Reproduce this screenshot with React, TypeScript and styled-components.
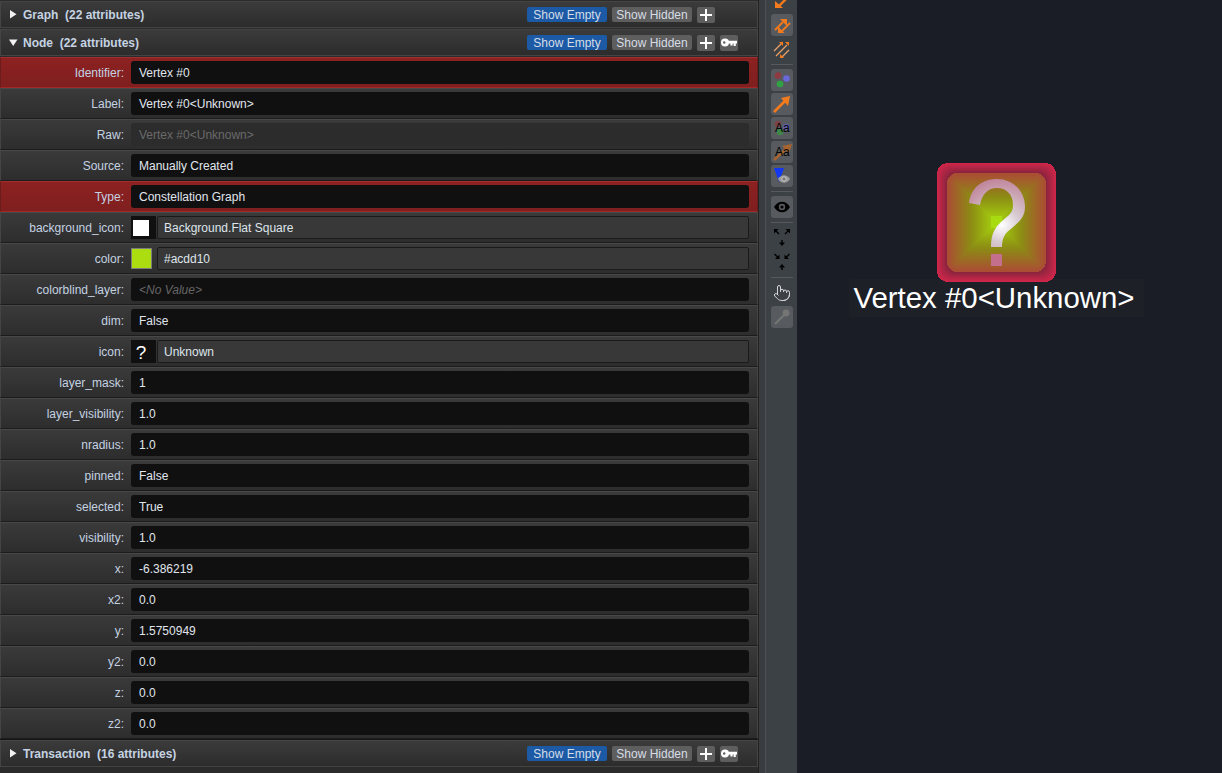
import React from 'react'
import styled, { createGlobalStyle } from 'styled-components'
import { Pointer } from 'lucide-react'

const GlobalStyle = createGlobalStyle`
  html, body {
    margin: 0;
    padding: 0;
    height: 100%;
    overflow: hidden;
    background: #1a1d26;
  }
  #root {
    height: 100%;
  }
`

const font = `"Liberation Sans", Arial, sans-serif`

const Shell = styled.div`
  display: flex;
  width: 1222px;
  height: 773px;
  font-family: ${font};
  font-size: 12px;
  overflow: hidden;
`

const Panel = styled.div`
  width: 758px;
  height: 773px;
  flex: none;
  box-sizing: border-box;
  background: #2b2b2b;
  display: flex;
  flex-direction: column;
  overflow: hidden;
  padding-top: 1px;
`

const Splitter = styled.div`
  width: 8px;
  flex: none;
  background: #3a3d40;
  border-left: 1px solid #222;
  border-right: 1px solid #4e5154;
  box-sizing: border-box;
`

const Toolbar = styled.div`
  width: 31px;
  flex: none;
  background: #3c4145;
  display: flex;
  flex-direction: column;
  align-items: center;
`

const Canvas = styled.div`
  flex: 1;
  background: #1a1d26;
  position: relative;
`

const Header = styled.div`
  height: 27px;
  box-sizing: border-box;
  flex: none;
  display: flex;
  align-items: center;
  margin-bottom: 1px;
  padding: 0 19px 0 8px;
  background: linear-gradient(#3b3b3b, #2c2c2c);
  border: 1px solid #444;
  color: #c5d3e2;
`

const Arrow = styled.svg`
  width: 9px;
  height: 9px;
  margin-right: 5px;
  flex: none;
`

const HeaderTitle = styled.span`
  white-space: pre;
  flex: 1;
  font-weight: bold;
`

const Pill = styled.div<{ $on?: boolean }>`
  width: 80px;
  height: 15px;
  line-height: 17px;
  text-align: center;
  border-radius: 2px;
  margin-right: 5px;
  background: ${p => (p.$on ? '#1c5aa6' : '#5e5e5e')};
  color: #d6dde6;
  white-space: nowrap;
`

const IconButton = styled.div`
  width: 18px;
  height: 16px;
  border-radius: 2px;
  background: #5e5e5e;
  margin-right: 5px;
  display: flex;
  align-items: center;
  justify-content: center;
  &:last-child {
    margin-right: 0;
  }
`

const KeySlot = styled.div`
  width: 18px;
`

const Rows = styled.div`
  display: flex;
  flex-direction: column;
  flex: none;
  border-bottom: 1px solid #161616;
`

const Row = styled.div<{ $key?: boolean }>`
  height: 31px;
  box-sizing: border-box;
  display: grid;
  grid-template-columns: 130px 1fr;
  align-items: center;
  padding-right: 8px;
  background: ${p =>
    p.$key ? 'linear-gradient(#8d2121, #7f1f1f)' : 'linear-gradient(#3a3a3a, #2d2d2d)'};
  border: 1px solid ${p => (p.$key ? '#6d1c1c' : '#444')};
  border-top-color: ${p => (p.$key ? '#a03030' : '#484848')};
  border-bottom-color: ${p => (p.$key ? '#a32727' : '#1c1c1c')};
`

const Name = styled.div`
  text-align: right;
  padding-right: 7px;
  height: 23px;
  line-height: 25px;
  color: #c4d2e2;
`

const ValueField = styled.div<{ $read?: boolean; $empty?: boolean }>`
  height: 23px;
  line-height: 25px;
  padding-left: 8px;
  border-radius: 3px;
  background: ${p => (p.$read ? '#2c2c2c' : '#101010')};
  color: ${p => (p.$read ? '#6a6a6a' : p.$empty ? '#666' : '#e0e6ee')};
  font-style: ${p => (p.$empty ? 'italic' : 'normal')};
  white-space: pre;
`

const ValuePair = styled.div`
  display: flex;
  height: 23px;
`

const Swatch = styled.div<{ $dark?: boolean }>`
  width: 25px;
  height: 23px;
  flex: none;
  background: ${p => (p.$dark ? '#101010' : 'transparent')};
  box-sizing: border-box;
  padding-left: 2px;
  display: flex;
  align-items: center;
`

const ColorChip = styled.div<{ $fill: string }>`
  width: 21px;
  height: 21px;
  margin-left: -2px;
  box-sizing: border-box;
  background: ${p => p.$fill};
  border: 1px solid #7d7d7d;
`

const WhiteSquare = styled.div`
  width: 16px;
  height: 16px;
  background: #fff;
`

const SwatchGlyph = styled.span`
  width: 16px;
  height: 19px;
  text-align: center;
  color: #fff;
  font-size: 19px;
  line-height: 21px;
`

const PairText = styled.div`
  flex: 1;
  height: 23px;
  line-height: 23px;
  box-sizing: border-box;
  margin-left: 1px;
  padding-left: 6px;
  background: #383838;
  border: 1px solid #1a1a1a;
  border-radius: 2px;
  color: #dfe5ec;
`

const ToolButton = styled.div<{ $flat?: boolean }>`
  width: 22px;
  height: 22px;
  flex: none;
  border-radius: 3px;
  margin-bottom: 2px;
  background: ${p => (p.$flat ? 'transparent' : '#575b5f')};
  display: flex;
  align-items: center;
  justify-content: center;
`

const ToolSep = styled.div`
  width: 22px;
  height: 1px;
  background: #565a5e;
  margin: 2px 0 4px;
  flex: none;
`

const TopClip = styled.div`
  height: 12px;
  width: 22px;
  flex: none;
  margin-bottom: 2px;
`

const NodeWrap = styled.div`
  position: absolute;
  left: 52px;
  top: 163px;
  display: flex;
  flex-direction: column;
  align-items: center;
  width: 295px;
`

const VertexSvg = styled.svg`
  position: relative;
  z-index: 1;
  display: block;
`

const NodeLabel = styled.div`
  margin-top: -3px;
  height: 38px;
  line-height: 38px;
  padding: 0 9px 0 4px;
  font-size: 29.4px;
  background: #1d2026;
  color: #fff;
  white-space: pre;
`

const PlusIcon = () => (
  <svg width="12" height="12" viewBox="0 0 12 12">
    <path d="M6 0v12M0 6h12" stroke="#fff" strokeWidth="2" />
  </svg>
)

const KeyIcon = () => (
  <svg width="16" height="9" viewBox="0 0 16 9">
    <circle cx="4" cy="4.5" r="4" fill="#fff" />
    <circle cx="3.2" cy="4.5" r="1.2" fill="#5e5e5e" />
    <path d="M7 2.8h9v2.6h-1.2V8h-2.2V5.4h-1V7.4H9.4V5.4H7z" fill="#fff" />
  </svg>
)

const SectionHeader = ({
  title,
  open,
  withKey
}: {
  title: string
  open?: boolean
  withKey?: boolean
}) => (
  <Header>
    <Arrow viewBox="0 0 9 9">
      <path d={open ? 'M0 1.5h8.5L4.2 8z' : 'M1 0v8.5L7.5 4.2z'} fill="#f2f2f2" />
    </Arrow>
    <HeaderTitle>{title}</HeaderTitle>
    <Pill $on>Show Empty</Pill>
    <Pill>Show Hidden</Pill>
    <IconButton>
      <PlusIcon />
    </IconButton>
    {withKey ? (
      <IconButton>
        <KeyIcon />
      </IconButton>
    ) : (
      <KeySlot />
    )}
  </Header>
)

type Attr = {
  name: string
  value: string
  key?: boolean
  read?: boolean
  empty?: boolean
  kind?: 'bg' | 'color' | 'icon'
}

const attrs: Attr[] = [
  { name: 'Identifier', value: 'Vertex #0', key: true },
  { name: 'Label', value: 'Vertex #0<Unknown>' },
  { name: 'Raw', value: 'Vertex #0<Unknown>', read: true },
  { name: 'Source', value: 'Manually Created' },
  { name: 'Type', value: 'Constellation Graph', key: true },
  { name: 'background_icon', value: 'Background.Flat Square', kind: 'bg' },
  { name: 'color', value: '#acdd10', kind: 'color' },
  { name: 'colorblind_layer', value: '<No Value>', empty: true },
  { name: 'dim', value: 'False' },
  { name: 'icon', value: 'Unknown', kind: 'icon' },
  { name: 'layer_mask', value: '1' },
  { name: 'layer_visibility', value: '1.0' },
  { name: 'nradius', value: '1.0' },
  { name: 'pinned', value: 'False' },
  { name: 'selected', value: 'True' },
  { name: 'visibility', value: '1.0' },
  { name: 'x', value: '-6.386219' },
  { name: 'x2', value: '0.0' },
  { name: 'y', value: '1.5750949' },
  { name: 'y2', value: '0.0' },
  { name: 'z', value: '0.0' },
  { name: 'z2', value: '0.0' }
]

const AttrValue = ({ attr }: { attr: Attr }) => {
  if (attr.kind === 'bg') {
    return (
      <ValuePair>
        <Swatch $dark>
          <WhiteSquare />
        </Swatch>
        <PairText>{attr.value}</PairText>
      </ValuePair>
    )
  }
  if (attr.kind === 'color') {
    return (
      <ValuePair>
        <Swatch>
          <ColorChip $fill={attr.value} />
        </Swatch>
        <PairText>{attr.value}</PairText>
      </ValuePair>
    )
  }
  if (attr.kind === 'icon') {
    return (
      <ValuePair>
        <Swatch $dark>
          <SwatchGlyph>?</SwatchGlyph>
        </Swatch>
        <PairText>{attr.value}</PairText>
      </ValuePair>
    )
  }
  return (
    <ValueField $read={attr.read} $empty={attr.empty}>
      {attr.value}
    </ValueField>
  )
}

const orange = '#f47a1e'

const AaText = () => (
  <text x="4" y="15" fontFamily={font} fontSize="12" fill="#000">
    Aa
  </text>
)

const Toolbox = () => (
  <Toolbar>
    <TopClip>
      <svg width="22" height="12" viewBox="0 0 22 12">
        <path d="M17 -3 8 6" stroke={orange} strokeWidth="2.4" />
        <path d="M4 1v7h8z" fill={orange} />
      </svg>
    </TopClip>
    <ToolButton>
      <svg width="22" height="22" viewBox="0 0 22 22">
        <path d="M4 16 12 8M19 9 11 17" stroke={orange} strokeWidth="1.8" />
        <path d="M9 5h7v7zM7 12.500v6.500h6.500z" fill={orange} />
      </svg>
    </ToolButton>
    <ToolButton $flat>
      <svg width="22" height="22" viewBox="0 0 22 22" fill="none">
        <path d="M3 13 10 6M5 18 16 7M11 19 18 12" stroke="#e8a06a" strokeWidth="1.3" />
        <path d="M8 4h4v4zM14 4h4v4zM9 16v4h4z" fill={orange} />
      </svg>
    </ToolButton>
    <ToolSep />
    <ToolButton>
      <svg width="22" height="22" viewBox="0 0 22 22">
        <circle cx="7" cy="6.500" r="3.300" fill="#8f3a40" />
        <circle cx="15.500" cy="9.500" r="3.300" fill="#6a68d8" />
        <circle cx="9" cy="15" r="3.300" fill="#2fa344" />
      </svg>
    </ToolButton>
    <ToolButton>
      <svg width="22" height="22" viewBox="0 0 22 22">
        <path d="M3 19 15 7" stroke={orange} strokeWidth="2.600" />
        <path d="M10 5 19 3 17 13z" fill={orange} />
      </svg>
    </ToolButton>
    <ToolButton>
      <svg width="22" height="22" viewBox="0 0 22 22">
        <circle cx="7" cy="7" r="3.300" fill="#7c4347" />
        <circle cx="15" cy="10" r="3.300" fill="#5f5fa8" />
        <circle cx="9" cy="15" r="3.300" fill="#3f8648" />
        <AaText />
      </svg>
    </ToolButton>
    <ToolButton>
      <svg width="22" height="22" viewBox="0 0 22 22">
        <path d="M3 19 15 8" stroke="#a8642e" strokeWidth="2.600" />
        <path d="M11 5 21 3 18 12z" fill="#a8642e" />
        <AaText />
      </svg>
    </ToolButton>
    <ToolButton>
      <svg width="22" height="22" viewBox="0 0 22 22">
        <path d="M3 3h10L8 17z" fill="#1238f0" />
        <path d="M7 14c3-5 9-5 12 0-3 5-9 5-12 0z" fill="#9c9c9c" />
        <circle cx="13" cy="14" r="2.200" fill="#7a7a7a" stroke="#c6c6c6" />
      </svg>
    </ToolButton>
    <ToolSep />
    <ToolButton>
      <svg width="18" height="12" viewBox="0 0 18 12">
        <path d="M1 6c4-7 12-7 16 0-4 7-12 7-16 0z" fill="#000" />
        <circle cx="9" cy="6" r="3.200" fill="#575b5f" />
        <circle cx="9" cy="6" r="1.600" fill="#000" />
      </svg>
    </ToolButton>
    <ToolSep />
    <ToolButton $flat>
      <svg width="22" height="22" viewBox="0 0 22 22">
        <path d="M3 2h4.500L3 6.500zM19 2h-4.500L19 6.500z" fill="#000" />
        <path d="M5 4l3 3M17 4l-3 3M11 13v3" stroke="#000" strokeWidth="1.400" />
        <path d="M8 15.500h6L11 19z" fill="#000" />
      </svg>
    </ToolButton>
    <ToolButton $flat>
      <svg width="22" height="22" viewBox="0 0 22 22">
        <path d="M8.500 8H4l4.500-4.500zM13.500 8H18l-4.500-4.500z" fill="#000" />
        <path d="M3.500 3l3 3M18.500 3l-3 3M11 16v3" stroke="#000" strokeWidth="1.400" />
        <path d="M8 16.500h6L11 13z" fill="#000" />
      </svg>
    </ToolButton>
    <ToolSep />
    <ToolButton $flat>
      <Pointer size={18} color="#d8d8d8" strokeWidth={1.300} />
    </ToolButton>
    <ToolButton>
      <svg width="22" height="22" viewBox="0 0 22 22">
        <path d="M4 18 13 9" stroke="#757575" strokeWidth="2" />
        <circle cx="15" cy="7" r="3.400" fill="#757575" />
      </svg>
    </ToolButton>
  </Toolbar>
)

const mix = (a: number[], b: number[], t: number) =>
  `rgb(${a.map((v, i) => Math.round(v + (b[i] - v) * t)).join(',')})`

const rimSteps = Array.from({ length: 10 }, (_, i) => i)
const innerSteps = Array.from({ length: 48 }, (_, i) => i)

const innerColor = (t: number) =>
  t < 0.5
    ? mix([171, 76, 52], [140, 140, 20], t * 2)
    : mix([140, 140, 20], [165, 210, 14], (t - 0.5) * 2)

const VertexIcon = () => (
  <VertexSvg width="119" height="119" viewBox="0 0 119 119" shapeRendering="crispEdges">
    <defs>
      <radialGradient id="mark" gradientUnits="userSpaceOnUse" cx="65" cy="62" r="48">
        <stop offset="0%" stopColor="#ffffff" />
        <stop offset="35%" stopColor="#d8ccd2" />
        <stop offset="100%" stopColor="#bf8298" />
      </radialGradient>
    </defs>
    {rimSteps.map(i => (
      <rect
        key={i}
        x={i}
        y={i}
        width={119 - i * 2}
        height={119 - i * 2}
        rx={11}
        fill={mix([206, 38, 74], [140, 36, 62], i / 9)}
      />
    ))}
    {innerSteps.map(i => (
      <rect
        key={i}
        x={10 + i}
        y={10 + i}
        width={99 - i * 2}
        height={99 - i * 2}
        rx={Math.max(10 - i, 0)}
        fill={innerColor(i / 47)}
      />
    ))}
    <g shapeRendering="auto">
      <rect x="54" y="53" width="11" height="12" fill="#a9dc10" />
      <path
        d="M32 40C34 24 46 16 60 16C76 16 88 28 88 44C88 54 82 59 75 65C68 70 65 75 65 84H54C54 72 57 65 65 58C72 52 76 50 76 42C76 31 69 25 60 25C51 25 45 31 43 42Z"
        fill="url(#mark)"
      />
      <rect x="54" y="91" width="11" height="12" fill="#c46f8c" />
    </g>
  </VertexSvg>
)

export default function App() {
  return (
    <>
      <GlobalStyle />
      <Shell>
        <Panel>
          <SectionHeader title="Graph  (22 attributes)" />
          <SectionHeader title="Node  (22 attributes)" open withKey />
          <Rows>
            {attrs.map(attr => (
              <Row key={attr.name} $key={attr.key}>
                <Name>{attr.name}:</Name>
                <AttrValue attr={attr} />
              </Row>
            ))}
          </Rows>
          <SectionHeader title="Transaction  (16 attributes)" withKey />
        </Panel>
        <Splitter />
        <Toolbox />
        <Canvas>
          <NodeWrap>
            <VertexIcon />
            <NodeLabel>Vertex #0&lt;Unknown&gt;</NodeLabel>
          </NodeWrap>
        </Canvas>
      </Shell>
    </>
  )
}
